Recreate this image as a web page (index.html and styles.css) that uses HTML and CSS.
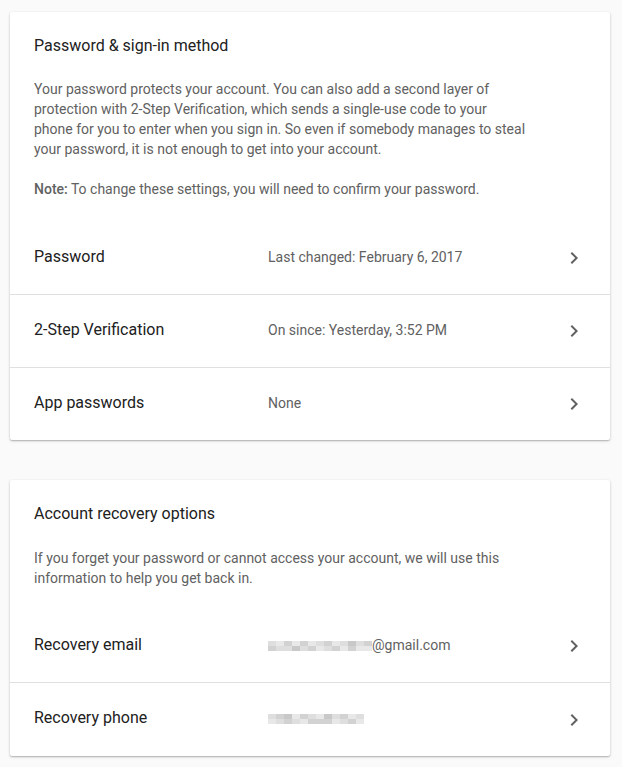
FILE: index.html
```html
<!DOCTYPE html>
<html lang="en">
<head>
<meta charset="utf-8">
<title>Security</title>
<link rel="stylesheet" href="styles.css">
</head>
<body>
<div class="page">
  <section class="card">
    <div class="intro">
      <h2 class="title">Password &amp; sign-in method</h2>
      <p class="desc">Your password protects your account. You can also add a second layer of protection with 2-Step Verification, which sends a single-use code to your phone for you to enter when you sign in. So even if somebody manages to steal your password, it is not enough to get into your account.</p>
      <p class="desc note"><b>Note:</b> To change these settings, you will need to confirm your password.</p>
    </div>
    <div class="row">
      <div class="label">Password</div>
      <div class="value">Last changed: February 6, 2017</div>
      <svg class="chev" viewBox="0 0 24 24" width="24" height="24"><path d="M10 6L8.59 7.41 13.17 12l-4.58 4.59L10 18l6-6z"/></svg>
    </div>
    <div class="row">
      <div class="label">2-Step Verification</div>
      <div class="value">On since: Yesterday, 3:52 PM</div>
      <svg class="chev" viewBox="0 0 24 24" width="24" height="24"><path d="M10 6L8.59 7.41 13.17 12l-4.58 4.59L10 18l6-6z"/></svg>
    </div>
    <div class="row">
      <div class="label">App passwords</div>
      <div class="value">None</div>
      <svg class="chev" viewBox="0 0 24 24" width="24" height="24"><path d="M10 6L8.59 7.41 13.17 12l-4.58 4.59L10 18l6-6z"/></svg>
    </div>
  </section>

  <section class="card">
    <div class="intro intro-2">
      <h2 class="title">Account recovery options</h2>
      <p class="desc">If you forget your password or cannot access your account, we will use this information to help you get back in.</p>
    </div>
    <div class="row">
      <div class="label">Recovery email</div>
      <div class="value"><span class="blur blur-email"><i class="c1"></i><i class="c2"></i><i class="c3"></i><i class="c1"></i><i class="c2"></i><i class="c1"></i><i class="c3"></i><i class="c4"></i><i class="c2"></i><i class="c1"></i><i class="c3"></i><i class="c2"></i><i class="c1"></i><i class="c3"></i><i class="c2"></i><i class="c1"></i><i class="c3"></i><i class="c2"></i><i class="c1"></i><i class="c3"></i><i class="c4"></i><i class="c2"></i><i class="c1"></i><i class="c3"></i><i class="c2"></i><i class="c3"></i></span>@gmail.com</div>
      <svg class="chev" viewBox="0 0 24 24" width="24" height="24"><path d="M10 6L8.59 7.41 13.17 12l-4.58 4.59L10 18l6-6z"/></svg>
    </div>
    <div class="row row-last">
      <div class="label">Recovery phone</div>
      <div class="value"><span class="blur blur-phone"><i class="c1"></i><i class="c3"></i><i class="c2"></i><i class="c1"></i><i class="c4"></i><i class="c2"></i><i class="c3"></i><i class="c1"></i><i class="c2"></i><i class="c3"></i><i class="c1"></i><i class="c2"></i><i class="c3"></i><i class="c2"></i><i class="c4"></i><i class="c2"></i><i class="c1"></i><i class="c3"></i><i class="c2"></i><i class="c1"></i><i class="c3"></i><i class="c2"></i><i class="c1"></i><i class="c3"></i></span></div>
      <svg class="chev" viewBox="0 0 24 24" width="24" height="24"><path d="M10 6L8.59 7.41 13.17 12l-4.58 4.59L10 18l6-6z"/></svg>
    </div>
  </section>
</div>
</body>
</html>
```

FILE: styles.css
```css
* { box-sizing: border-box; }
html, body { margin: 0; padding: 0; }
body {
  background: #fafafa;
  font-family: Roboto, "Liberation Sans", Arial, sans-serif;
  color: #212121;
}
.page {
  padding: 12px 12px 12px 10px;
  display: flex;
  flex-direction: column;
  gap: 40px;
}
.card {
  background: #fff;
  border-radius: 2px;
  box-shadow: 0 1px 1px rgba(0,0,0,0.14), 0 1px 3px rgba(0,0,0,0.2);
}
.intro {
  padding: 22px 24px 23px;
}
.intro-2 { padding-bottom: 22px; }
.title {
  margin: 0;
  font-size: 16px;
  line-height: 24px;
  font-weight: 400;
  color: #212121;
}
.desc {
  margin: 21px 0 0;
  max-width: 494px;
  font-size: 14px;
  line-height: 20px;
  color: #616161;
}
.intro-2 .desc { margin-top: 22px; }
.note { margin-top: 20px; }
.note b { font-weight: 500; color: #616161; }
.row {
  display: flex;
  align-items: center;
  height: 72px;
  padding: 0 24px;
}
.row + .row {
  border-top: 1px solid #e0e0e0;
  height: 73px;
}
.row.row-last { height: 74px; }
.label {
  width: 234px;
  flex: none;
  font-size: 16px;
  line-height: 24px;
  color: #212121;
  margin-top: -3px;
}
.value {
  flex: 1;
  font-size: 14px;
  line-height: 20px;
  color: #616161;
  margin-top: -3px;
  display: flex;
  align-items: center;
}
.chev {
  flex: none;
  fill: #616161;
}
.blur {
  display: inline-grid;
  grid-auto-flow: column;
  grid-template-rows: 5px 5px;
  margin-top: 2px;
}
.blur-email { grid-template-columns: repeat(13, 8px); }
.blur-phone { grid-template-columns: repeat(12, 8px); }
.blur i { display: block; }
.c1 { background: #dedede; }
.c2 { background: #d2d2d2; }
.c3 { background: #e8e8e8; }
.c4 { background: #c8c8c8; }
```
